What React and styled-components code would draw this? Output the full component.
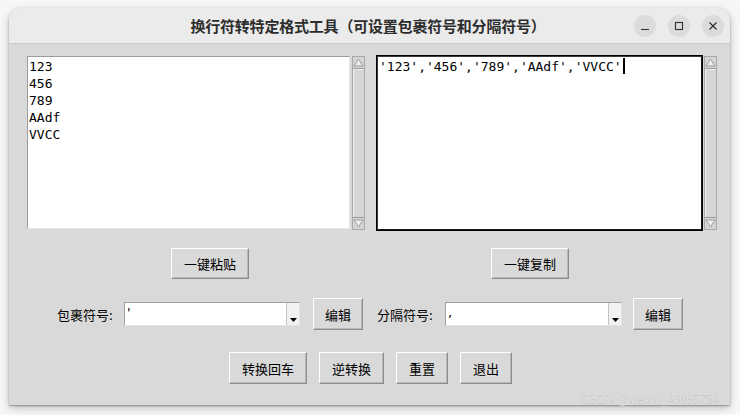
import styled, { createGlobalStyle } from "styled-components";

const GlobalStyle = createGlobalStyle`
  html, body {
    margin: 0;
    padding: 0;
    background: #f7f7f7;
  }
  body {
    font-family: "Noto Sans CJK SC", "Noto Sans", sans-serif;
  }
`;

const CJK = `"Noto Sans CJK SC", "Noto Sans", sans-serif`;
const MONO = `"DejaVu Sans Mono", "Liberation Mono", monospace`;

// Window frame
const Page = styled.div`
  position: relative;
  width: 740px;
  height: 415px;
  padding: 8px 0 0 9px;
  box-sizing: border-box;
  overflow: hidden;
`;

const Window = styled.div`
  width: 721px;
  height: 397px;
  border-radius: 12px 12px 0 0;
  overflow: hidden;
  display: flex;
  flex-direction: column;
  background: #d9d9d9;
  box-shadow: 0 1px 2px rgba(0, 0, 0, 0.35), 0 3px 10px rgba(0, 0, 0, 0.22);
`;

const TitleBar = styled.div`
  height: 35px;
  flex: none;
  display: grid;
  grid-template-columns: 1fr auto 1fr;
  align-items: center;
  background: #ebebeb;
  border-bottom: 1px solid #c9c9c9;
`;

const Title = styled.div`
  grid-column: 2;
  font-family: ${CJK};
  font-size: 15px;
  font-weight: 700;
  color: #2d2d2d;
  letter-spacing: -0.2px;
  margin-right: 3px;
`;

const Controls = styled.div`
  grid-column: 3;
  justify-self: end;
  display: flex;
  gap: 12px;
  padding-right: 6px;
`;

const CircleButton = styled.div`
  width: 22px;
  height: 22px;
  border-radius: 50%;
  background: #dcdcdc;
  display: flex;
  align-items: center;
  justify-content: center;
`;

// Body
const Body = styled.div`
  flex: 1;
  display: flex;
  flex-direction: column;
  padding-top: 11px;
`;

const TextRow = styled.div`
  display: flex;
  align-items: flex-start;
  padding-left: 18px;
`;

const TextGroup = styled.div`
  display: flex;
  align-items: flex-start;
  gap: ${(p) => p.$gap}px;
  margin-top: ${(p) => p.$top || 0}px;
  margin-left: ${(p) => p.$left || 0}px;
`;

const TextBox = styled.div`
  box-sizing: border-box;
  width: ${(p) => p.$w}px;
  height: ${(p) => p.$h}px;
  background: #fff;
  font-family: ${MONO};
  font-size: 13px;
  line-height: 17px;
  color: #000;
  white-space: pre;
  padding: ${(p) => (p.$focus ? "2px 2px" : "1px 1px")};
  border: 1px solid;
  border-color: ${(p) => (p.$focus ? "#000" : "#9c9c9c #e8e8e8 #e8e8e8 #9c9c9c")};
  box-shadow: ${(p) => (p.$focus ? "inset 1px 1px 0 #3a3a3a, inset -1px -1px 0 #1a1a1a" : "none")};
`;

const Caret = styled.span`
  display: inline-block;
  width: 2px;
  height: 16px;
  background: #000;
  vertical-align: -3px;
  margin-left: 1px;
`;

const Scrollbar = styled.div`
  box-sizing: border-box;
  width: 13px;
  height: 174px;
  margin-top: ${(p) => p.$top || 0}px;
  display: flex;
  flex-direction: column;
  background: #d9d9d9;
  border: 1px solid #a8a8a8;
`;

const ArrowBox = styled.div`
  height: 11px;
  flex: none;
  display: flex;
  align-items: center;
  justify-content: center;
  background: #d4d4d4;
`;

const Thumb = styled.div`
  flex: 1;
  background: #d6d6d6;
  border-top: 1px solid #9a9a9a;
  border-bottom: 1px solid #9a9a9a;
  box-shadow: inset 1px 1px 0 #ececec;
`;

const Row = styled.div`
  display: flex;
  align-items: center;
  margin-top: ${(p) => p.$top}px;
  padding-left: ${(p) => p.$left}px;
  gap: ${(p) => p.$gap || 0}px;
`;

const Button = styled.div`
  box-sizing: border-box;
  height: ${(p) => p.$h || 32}px;
  padding: 0 ${(p) => p.$px || 12}px;
  margin-left: ${(p) => p.$ml || 0}px;
  display: flex;
  align-items: center;
  justify-content: center;
  font-family: ${CJK};
  font-size: 13px;
  color: #000;
  background: #d9d9d9;
  border: 1px solid;
  border-color: #ffffff #8c8c8c #8c8c8c #ffffff;
  box-shadow: inset -1px -1px 0 #b8b8b8;
  white-space: nowrap;
`;

const Label = styled.div`
  width: ${(p) => p.$w}px;
  margin-left: ${(p) => p.$ml || 0}px;
  font-family: ${CJK};
  font-size: 13px;
  color: #000;
  white-space: nowrap;
`;

const Combo = styled.div`
  box-sizing: border-box;
  width: ${(p) => p.$w}px;
  height: 24px;
  display: flex;
  background: #fff;
  border: 1px solid;
  border-color: #a0a0a0 #e4e4e4 #e4e4e4 #a0a0a0;
`;

const ComboValue = styled.div`
  flex: 1;
  padding-left: 2px;
  font-family: "DejaVu Sans", "Liberation Sans", sans-serif;
  font-size: 13px;
  line-height: 20px;
  color: #000;
`;

const ComboArrow = styled.div`
  width: 13px;
  display: flex;
  align-items: flex-end;
  justify-content: center;
  padding-bottom: 3px;
  box-sizing: border-box;
  border-left: 1px solid #c4c4c4;
  background: #f2f2f2;
`;

const Watermark = styled.div`
  position: absolute;
  right: 21px;
  top: 393px;
  font-family: "Liberation Sans", Arial, sans-serif;
  font-size: 12px;
  color: rgba(190, 190, 190, 0.85);
  text-shadow: 0 0 1px rgba(255, 255, 255, 0.9);
  letter-spacing: -0.2px;
`;

function Tri({ up }) {
  return (
    <svg width="11" height="9" viewBox="0 0 11 9">
      <polygon
        points={up ? "5.5,1 10,8 1,8" : "1,1 10,1 5.5,8"}
        fill="#ececec"
        stroke="#9a9a9a"
        strokeWidth="1"
      />
    </svg>
  );
}

function ScrollBar({ top }) {
  return (
    <Scrollbar $top={top}>
      <ArrowBox>
        <Tri up />
      </ArrowBox>
      <Thumb />
      <ArrowBox>
        <Tri />
      </ArrowBox>
    </Scrollbar>
  );
}

function Dropdown({ w, value }) {
  return (
    <Combo $w={w}>
      <ComboValue>{value}</ComboValue>
      <ComboArrow>
        <svg width="7" height="4" viewBox="0 0 7 4">
          <polygon points="0,0 7,0 3.5,4" fill="#000" />
        </svg>
      </ComboArrow>
    </Combo>
  );
}

export default function App() {
  return (
    <Page>
      <GlobalStyle />
      <Window>
        <TitleBar>
          <Title>换行符转特定格式工具（可设置包裹符号和分隔符号）</Title>
          <Controls>
            <CircleButton>
              <svg width="10" height="10" viewBox="0 0 10 10">
                <line x1="1" y1="8.5" x2="9" y2="8.5" stroke="#2e2e2e" strokeWidth="1.2" />
              </svg>
            </CircleButton>
            <CircleButton>
              <svg width="10" height="10" viewBox="0 0 10 10">
                <rect x="1.5" y="1.5" width="7" height="7" fill="none" stroke="#2e2e2e" strokeWidth="1.1" />
              </svg>
            </CircleButton>
            <CircleButton>
              <svg width="10" height="10" viewBox="0 0 10 10">
                <path d="M1.5 1.5 L8.5 8.5 M8.5 1.5 L1.5 8.5" stroke="#2e2e2e" strokeWidth="1.2" />
              </svg>
            </CircleButton>
          </Controls>
        </TitleBar>

        <Body>
          <TextRow>
            <TextGroup $gap={2} $top={1}>
              <TextBox $w={323} $h={173}>
                {"123\n456\n789\nAAdf\nVVCC"}
              </TextBox>
              <ScrollBar />
            </TextGroup>
            <TextGroup $gap={1} $left={11}>
              <TextBox $w={327} $h={176} $focus>
                {"'123','456','789','AAdf','VVCC'"}
                <Caret />
              </TextBox>
              <ScrollBar top={1} />
            </TextGroup>
          </TextRow>

          <Row $top={17} $left={162} $gap={242}>
            <Button $h={31}>一键粘贴</Button>
            <Button $h={31}>一键复制</Button>
          </Row>

          <Row $top={19} $left={48}>
            <Label $w={67}>包裹符号:</Label>
            <Dropdown w={176} value="'" />
            <Button $ml={13} $px={11}>编辑</Button>
            <Label $w={68} $ml={14}>分隔符号:</Label>
            <Dropdown w={177} value="," />
            <Button $ml={11} $px={11}>编辑</Button>
          </Row>

          <Row $top={22} $left={220} $gap={12}>
            <Button>转换回车</Button>
            <Button>逆转换</Button>
            <Button>重置</Button>
            <Button>退出</Button>
          </Row>
        </Body>
      </Window>
      <Watermark>CSDN @weixin_43985754</Watermark>
    </Page>
  );
}
